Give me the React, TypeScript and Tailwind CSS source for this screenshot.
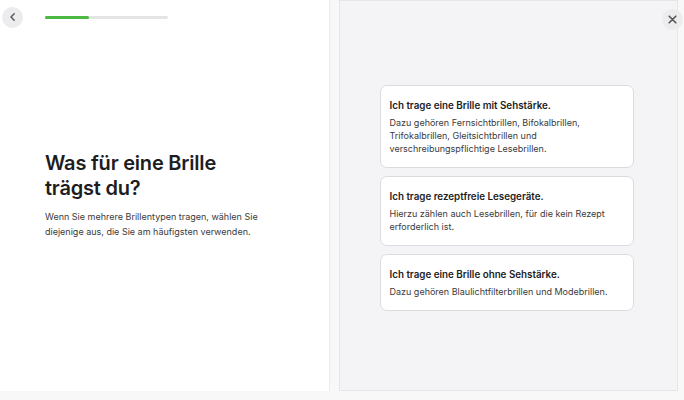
import React from "react";

type Option = {
  title: string;
  body: string;
};

const options: Option[] = [
  {
    title: "Ich trage eine Brille mit Sehstärke.",
    body: "Dazu gehören Fernsichtbrillen, Bifokalbrillen, Trifokalbrillen, Gleitsichtbrillen und verschreibungspflichtige Lesebrillen.",
  },
  {
    title: "Ich trage rezeptfreie Lesegeräte.",
    body: "Hierzu zählen auch Lesebrillen, für die kein Rezept erforderlich ist.",
  },
  {
    title: "Ich trage eine Brille ohne Sehstärke.",
    body: "Dazu gehören Blaulichtfilterbrillen und Modebrillen.",
  },
];

const ChevronLeft = () => (
  <svg width="10" height="10" viewBox="0 0 10 10" fill="none">
    <path d="M6.2 1.8 3 5l3.2 3.2" stroke="#555" strokeWidth="1.4" strokeLinecap="round" strokeLinejoin="round" />
  </svg>
);

const CloseIcon = () => (
  <svg width="9" height="9" viewBox="0 0 9 9" fill="none">
    <path d="M1.2 1.2l6.6 6.6M7.8 1.2 1.2 7.8" stroke="#555" strokeWidth="1.6" strokeLinecap="round" />
  </svg>
);

export default function App() {
  const progress = 36;

  return (
    <div className="relative h-[400px] w-[684px] overflow-hidden bg-[#f8f8f8] font-['Inter',sans-serif] text-[#1d1d1f]">
      <div className="flex h-[391px]">
        {/* question side */}
        <div className="relative flex w-[330px] flex-col border-r border-[#ececec] bg-white">
          <div className="flex h-[34px] items-center pl-[2px]">
            <button className="flex h-[21px] w-[21px] items-center justify-center rounded-full bg-[#ececee]">
              <ChevronLeft />
            </button>
            <div className="ml-[22px] h-[3px] w-[123px] rounded-full bg-[#e4e4e4]">
              <div className="h-full rounded-full bg-[#4cb944]" style={{ width: `${progress}%` }} />
            </div>
          </div>
          <div className="flex flex-1 flex-col justify-center px-[45px] pb-[36px]">
            <h1 className="text-[20px] font-semibold leading-[25px] tracking-[-0.2px]">
              Was für eine Brille
              <br />
              trägst du?
            </h1>
            <p className="mt-[8px] text-[9px] leading-[15px] text-[#3a3a3c]">
              Wenn Sie mehrere Brillentypen tragen, wählen Sie
              <br />
              diejenige aus, die Sie am häufigsten verwenden.
            </p>
          </div>
        </div>

        {/* answer side */}
        <div className="ml-[9px] flex w-[339px] items-center justify-center border border-[#e6e6e8] bg-[#f4f4f6]">
          <div className="mr-[4px] flex w-[254px] flex-col gap-[8px] pt-[4px]">
            {options.map((o) => (
              <div
                key={o.title}
                className="rounded-[7px] border border-[#dcdce0] bg-white px-[9px] pb-[12px] pt-[13px]"
              >
                <div className="text-[9.8px] font-semibold leading-[13px]">{o.title}</div>
                <div className="mt-[4px] text-[9px] leading-[13px] text-[#3a3a3c]">{o.body}</div>
              </div>
            ))}
          </div>
        </div>
      </div>

      <button className="absolute right-[1px] top-[9px] flex h-[21px] w-[21px] items-center justify-center rounded-full bg-[#ececee]">
        <CloseIcon />
      </button>
    </div>
  );
}
